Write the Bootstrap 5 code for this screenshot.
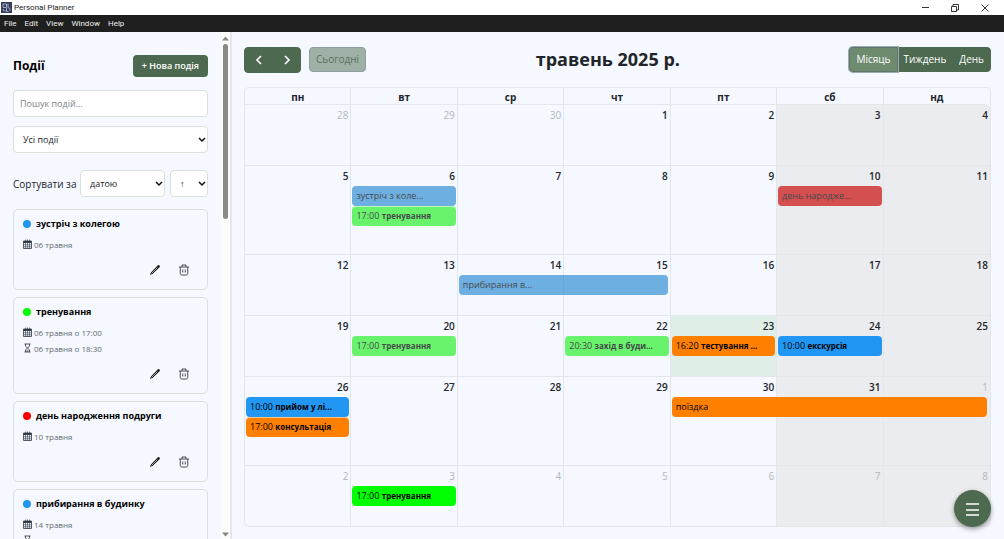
<!DOCTYPE html>
<html lang="uk">
<head>
<meta charset="utf-8">
<meta name="viewport" content="width=device-width, initial-scale=1">
<title>Personal Planner</title>
<link href="https://cdn.jsdelivr.net/npm/bootstrap@5.3.0/dist/css/bootstrap.min.css" rel="stylesheet">
<style>
  :root { --green: #4d694f; --line: #e3e6ea; --soft: #d8e2dc; --paper: #f5f8ff; }
  body { font-family: "Open Sans", "Noto Sans", sans-serif; font-size: 10px; line-height: 16px; color: #212529; background: var(--paper); }
  button { font-family: inherit; }
  .titlebar { height: 15px; background: #fff; font-family: Roboto, sans-serif; font-size: 8px; color: #222; padding-left: 1px; }
  .app-icon { width: 11px; height: 11px; margin-right: 2px; }
  .menubar { height: 17px; background: #1f1f1f; font-family: Roboto, sans-serif; font-size: 8px; padding-left: 4px; gap: 8px; }
  .menubar a { color: #eee; text-decoration: none; }
  .win-btn { width: 30px; height: 15px; border: 0; background: none; padding: 0; display: flex; align-items: center; justify-content: center; }

  .workspace { min-height: 0; }
  .sidebar { width: 232px; border-right: 2px solid #e3e9e8; }
  .side-content { padding: 21px 13px 0; overflow: hidden; min-width: 0; }
  .side-content h2 { font-size: 12px; font-weight: 700; line-height: 24px; color: #000; padding-top: 1px; }
  .btn-new, .btn-new:hover { background: var(--green); color: #fff; font-size: 9px; font-weight: 600; line-height: 16px; padding: 3px 9px; border: 0; border-radius: 4px; }
  .field { font-family: inherit; height: 27px; background: #fff; border: 1px solid var(--soft); border-radius: 4px; color: #212529; font-size: 9px; padding: 0 6px; }
  .field::placeholder { color: #7b7f84; }
  .search { margin: 12px 0 9px; }
  .pick { position: relative; }
  .pick .field { appearance: none; width: 100%; display: block; padding: 0 9px; }
  .pick svg { position: absolute; right: 2px; top: 10px; width: 8px; height: 7px; pointer-events: none; }
  .sorting { margin: 17px 0 12px; }
  .sort-label { font-size: 10px; white-space: nowrap; width: 67px; }
  .direction { width: 38px; margin-left: 5px; }
  .event-card { border: 1px solid var(--soft); border-radius: 5px; padding: 6px 9px 7px; margin-bottom: 7px; flex: none; }
  .event-card h3 { font-size: 9px; font-weight: 700; line-height: 16px; margin: 0 0 5px; color: #000; gap: 5px; white-space: nowrap; }
  .dot { width: 8px; height: 8px; border-radius: 50%; flex: none; }
  .when { font-size: 8px; line-height: 16px; color: #666a70; gap: 2px; }
  .when svg { width: 9px; height: 10px; flex: none; margin-bottom: 2px; }
  .tools { margin-top: 5px; gap: 5px; padding-right: 2px; }
  .tools button { width: 24px; height: 24px; border: 0; padding: 0; background: none; display: flex; align-items: center; justify-content: center; }
  .tools svg { width: 12px; height: 12px; }
  .rail { width: 9px; background: #fbfbfc; padding: 4px 0 2px; flex: none; }
  .rail svg { width: 7px; height: 5px; display: block; flex: none; }
  .thumb { width: 5px; height: 35%; margin-top: 3px; background: #898989; border-radius: 3px; }

  .planner { padding: 14px 13px 12px 12px; min-width: 0; }
  .toolbar { margin-bottom: 14px; height: 27px; }
  .toolbar h1 { font-size: 18px; font-weight: 700; line-height: 27px; margin: 0; }
  .toolbar .btn { background: var(--green); border: 1px solid var(--green); color: #fff; font-size: 10px; line-height: 15px; padding: 4px 6px; border-radius: 4px; height: 25px; }
  .toolbar .btn-group .btn { flex: none; }
  .toolbar .btn.step { width: 29px; padding: 0; height: 26px; display: flex; align-items: center; justify-content: center; }
  .toolbar .btn.today:disabled { background: #9fb1a6; border-color: #8f9fa0; color: #5b6f62; opacity: 1; margin-left: 8px; }
  .toolbar .btn.active { background: #6e8b70; border-color: #5f7567; box-shadow: 0 0 0 1px #9da9b3; }

  .month { border: 1px solid var(--line); border-radius: 5px; overflow: hidden; }
  .month table { width: 100%; table-layout: fixed; border-collapse: separate; border-spacing: 0; }
  .month th { height: 16px; padding: 2px 0 0; text-align: center; font-size: 10px; line-height: 14px; font-weight: 700; }
  .month th:not(:last-child), .month td:not(:last-child) { border-right: 1px solid var(--line); }
  .month td { height: 61px; border-top: 1px solid var(--line); padding: 0 2px 0 1px; vertical-align: top; position: relative; }
  .month .tall td { height: 89px; }
  .month td:nth-child(n+6) { background: #ebecef; }
  .month tr:first-child td:last-child { border-top-right-radius: 5px; }
  .month td.now { background: #e0eee8; }
  .num { display: block; text-align: right; font-size: 10px; font-weight: 600; line-height: 20px; }
  .out .num, .num.out { color: #b3b7bc; font-weight: 500; }
  .entry { height: 20px; border-radius: 4px; margin: 0 -1px 0 0; font-size: 9px; line-height: 20px; padding: 0 4px; color: #000; white-space: nowrap; overflow: hidden; position: relative; }
  .entry + .entry { box-shadow: inset 0 1px 0 #ffffff88; }
  .entry b { font-weight: 700; font-size: 8px; }
  .blue { background: #2196f3; }
  .lime { background: #0f0; }
  .red { background: red; }
  .orange { background: #ff8000; }
  .past { color: #454a4a; }
  .past.blue { background: rgba(27, 130, 208, .62); }
  .past.lime { background: rgba(20, 240, 20, .62); }
  .past.red { background: rgba(201, 5, 5, .68); }
  .span-2 { width: calc(200% + 4px); z-index: 1; }
  .span-3 { width: calc(300% + 8px); z-index: 1; }
  .fab { position: fixed; right: 13px; bottom: 12px; width: 37px; height: 37px; border-radius: 50%; border: 0; padding: 0; background: var(--green); box-shadow: 0 2px 5px #0006; z-index: 5; }
  .fab svg { width: 15px; height: 15px; display: block; margin: 2px auto 0; }
</style>
</head>
<body class="vh-100 d-flex flex-column overflow-hidden">
<svg class="d-none" aria-hidden="true">
  <symbol id="i-cal" viewBox="0 0 18 20"><path d="M1 4h16v15H1z" fill="none" stroke="#343a46" stroke-width="1.600"/><path d="M1 4h16v4H1z" fill="#343a46"/><path d="M5 1v4M9 1v4M13 1v4M1 11.500h16M1 15.500h16M5 8v11M9 8v11M13 8v11" stroke="#343a46" stroke-width="1.200"/></symbol>
  <symbol id="i-glass" viewBox="0 0 18 20"><path d="M3 2h12M3 18h12M5 2v4l8 8v4M13 2v4l-8 8v4" fill="none" stroke="#343a46" stroke-width="1.700"/><path d="M7 16h4" stroke="#343a46" stroke-width="2"/></symbol>
  <symbol id="i-pen" viewBox="0 0 24 24"><path d="M2 22l2-5L18 2.500q2-1 3 .5t.5 3L7 20z" fill="#111"/><path d="M5 19L17 7" stroke="#bbb" stroke-width="1.600"/></symbol>
  <symbol id="i-bin" viewBox="0 0 24 24"><path d="M2 6h20M8 6V2h8v4M4.500 6v13q0 3 3 3h9q3 0 3-3V6M9.500 11v6M14.500 11v6" fill="none" stroke="#4a4f59" stroke-width="2"/></symbol>
  <symbol id="i-down" viewBox="0 0 16 12"><path d="M2 3l6 6 6-6" fill="none" stroke="#111" stroke-width="3"/></symbol>
</svg>

<header class="flex-shrink-0">
  <div class="titlebar d-flex align-items-center">
    <svg class="app-icon" viewBox="0 0 22 22"><path d="M0 0h22v22H0z" fill="#343b5c"/><path d="M4 4h7v7H4zM14 3v8q5 0 4 7M4 14q0 5 5 4M11 12v7h4" fill="none" stroke="#c5cbe0" stroke-width="1.500"/></svg>
    <span>Personal Planner</span>
    <div class="d-flex ms-auto me-1">
      <button class="win-btn" aria-label="Minimize"><svg width="7" height="7"><path d="M0 3.500h7" stroke="#333"/></svg></button>
      <button class="win-btn" aria-label="Restore"><svg width="8" height="8" fill="none" stroke="#333"><path d="M.5 2.500h5v5h-5zM2 2.500v-2h5.500V6h-2"/></svg></button>
      <button class="win-btn" aria-label="Close"><svg width="8" height="8"><path d="M.5.5l7 7M7.500.5l-7 7" stroke="#333"/></svg></button>
    </div>
  </div>
  <nav class="menubar d-flex align-items-center"><a href="#">File</a><a href="#">Edit</a><a href="#">View</a><a href="#">Window</a><a href="#">Help</a></nav>
</header>

<main class="workspace d-flex flex-grow-1">
  <aside class="sidebar d-flex flex-shrink-0">
    <div class="side-content flex-grow-1 d-flex flex-column">
      <div class="d-flex justify-content-between align-items-center flex-shrink-0">
        <h2 class="m-0">Події</h2>
        <button class="btn btn-new">+ Нова подія</button>
      </div>
      <input class="field search flex-shrink-0 w-100" type="text" placeholder="Пошук подій..." aria-label="Пошук подій">
      <div class="pick flex-shrink-0"><select class="field" aria-label="Фільтр"><option>Усі події</option></select><svg><use href="#i-down"/></svg></div>
      <div class="sorting d-flex align-items-center flex-shrink-0">
        <label class="sort-label" for="sort">Сортувати за</label>
        <div class="pick flex-grow-1"><select class="field" id="sort"><option>датою</option></select><svg><use href="#i-down"/></svg></div>
        <div class="pick direction"><select class="field" aria-label="Напрямок"><option>↑</option></select><svg><use href="#i-down"/></svg></div>
      </div>

      <article class="event-card">
        <h3 class="d-flex align-items-center"><span class="dot blue"></span>зустріч з колегою</h3>
        <div class="when d-flex align-items-center"><svg><use href="#i-cal"/></svg>06 травня</div>
        <div class="tools d-flex justify-content-end"><button aria-label="Редагувати"><svg><use href="#i-pen"/></svg></button><button aria-label="Видалити"><svg><use href="#i-bin"/></svg></button></div>
      </article>
      <article class="event-card">
        <h3 class="d-flex align-items-center"><span class="dot lime"></span>тренування</h3>
        <div class="when d-flex align-items-center"><svg><use href="#i-cal"/></svg>06 травня о 17:00</div>
        <div class="when d-flex align-items-center"><svg><use href="#i-glass"/></svg>06 травня о 18:30</div>
        <div class="tools d-flex justify-content-end"><button aria-label="Редагувати"><svg><use href="#i-pen"/></svg></button><button aria-label="Видалити"><svg><use href="#i-bin"/></svg></button></div>
      </article>
      <article class="event-card">
        <h3 class="d-flex align-items-center"><span class="dot red"></span>день народження подруги</h3>
        <div class="when d-flex align-items-center"><svg><use href="#i-cal"/></svg>10 травня</div>
        <div class="tools d-flex justify-content-end"><button aria-label="Редагувати"><svg><use href="#i-pen"/></svg></button><button aria-label="Видалити"><svg><use href="#i-bin"/></svg></button></div>
      </article>
      <article class="event-card">
        <h3 class="d-flex align-items-center"><span class="dot blue"></span>прибирання в будинку</h3>
        <div class="when d-flex align-items-center"><svg><use href="#i-cal"/></svg>14 травня</div>
        <div class="when d-flex align-items-center"><svg><use href="#i-glass"/></svg>15</div>
      </article>
    </div>
    <div class="rail d-flex flex-column align-items-center">
      <svg viewBox="0 0 7 5"><path d="M0 4.500L3.500.5 7 4.500z" fill="#858585"/></svg>
      <div class="thumb"></div>
      <svg class="mt-auto" viewBox="0 0 7 5"><path d="M0 .5L3.500 4.500 7 .5z" fill="#858585"/></svg>
    </div>
  </aside>

  <section class="planner flex-grow-1">
    <div class="toolbar d-flex align-items-center justify-content-between">
      <div class="d-flex align-items-center">
        <div class="btn-group">
          <button class="btn step" aria-label="Назад"><svg width="8" height="12"><path d="M6 2L2 6l4 4" fill="none" stroke="#fff" stroke-width="1.700"/></svg></button>
          <button class="btn step" aria-label="Вперед"><svg width="8" height="12"><path d="M2 2l4 4-4 4" fill="none" stroke="#fff" stroke-width="1.700"/></svg></button>
        </div>
        <button class="btn today" disabled>Сьогодні</button>
      </div>
      <h1>травень 2025 р.</h1>
      <div class="btn-group"><button class="btn active">Місяць</button><button class="btn">Тиждень</button><button class="btn">День</button></div>
    </div>

    <div class="month">
      <table>
        <thead><tr><th>пн</th><th>вт</th><th>ср</th><th>чт</th><th>пт</th><th>сб</th><th>нд</th></tr></thead>
        <tbody>
          <tr>
            <td><span class="num out">28</span></td><td><span class="num out">29</span></td><td><span class="num out">30</span></td>
            <td><span class="num">1</span></td><td><span class="num">2</span></td><td><span class="num">3</span></td><td><span class="num">4</span></td>
          </tr>
          <tr class="tall">
            <td><span class="num">5</span></td>
            <td><span class="num">6</span><div class="entry blue past">зустріч з коле...</div><div class="entry lime past">17:00 <b>тренування</b></div></td>
            <td><span class="num">7</span></td><td><span class="num">8</span></td><td><span class="num">9</span></td>
            <td><span class="num">10</span><div class="entry red past">день народже...</div></td>
            <td><span class="num">11</span></td>
          </tr>
          <tr>
            <td><span class="num">12</span></td><td><span class="num">13</span></td>
            <td><span class="num">14</span><div class="entry blue past span-2">прибирання в...</div></td>
            <td><span class="num">15</span></td><td><span class="num">16</span></td><td><span class="num">17</span></td><td><span class="num">18</span></td>
          </tr>
          <tr>
            <td><span class="num">19</span></td>
            <td><span class="num">20</span><div class="entry lime past">17:00 <b>тренування</b></div></td>
            <td><span class="num">21</span></td>
            <td><span class="num">22</span><div class="entry lime past">20:30 <b>захід в буди...</b></div></td>
            <td class="now"><span class="num">23</span><div class="entry orange">16:20 <b>тестування ...</b></div></td>
            <td><span class="num">24</span><div class="entry blue">10:00 <b>екскурсія</b></div></td>
            <td><span class="num">25</span></td>
          </tr>
          <tr class="tall">
            <td><span class="num">26</span><div class="entry blue">10:00 <b>прийом у лі...</b></div><div class="entry orange">17:00 <b>консультація</b></div></td>
            <td><span class="num">27</span></td><td><span class="num">28</span></td><td><span class="num">29</span></td>
            <td><span class="num">30</span><div class="entry orange span-3">поїздка</div></td>
            <td><span class="num">31</span></td><td><span class="num out">1</span></td>
          </tr>
          <tr class="out">
            <td><span class="num">2</span></td>
            <td><span class="num">3</span><div class="entry lime">17:00 <b>тренування</b></div></td>
            <td><span class="num">4</span></td><td><span class="num">5</span></td><td><span class="num">6</span></td><td><span class="num">7</span></td><td><span class="num">8</span></td>
          </tr>
        </tbody>
      </table>
    </div>
  </section>
</main>
<button class="fab" aria-label="Меню"><svg viewBox="0 0 15 15"><path d="M1 2h13M1 8h13M1 13h13" stroke="#fff" stroke-width="1.500"/></svg></button>
<script src="https://cdn.jsdelivr.net/npm/bootstrap@5.3.0/dist/js/bootstrap.bundle.min.js"></script>
</body>
</html>
